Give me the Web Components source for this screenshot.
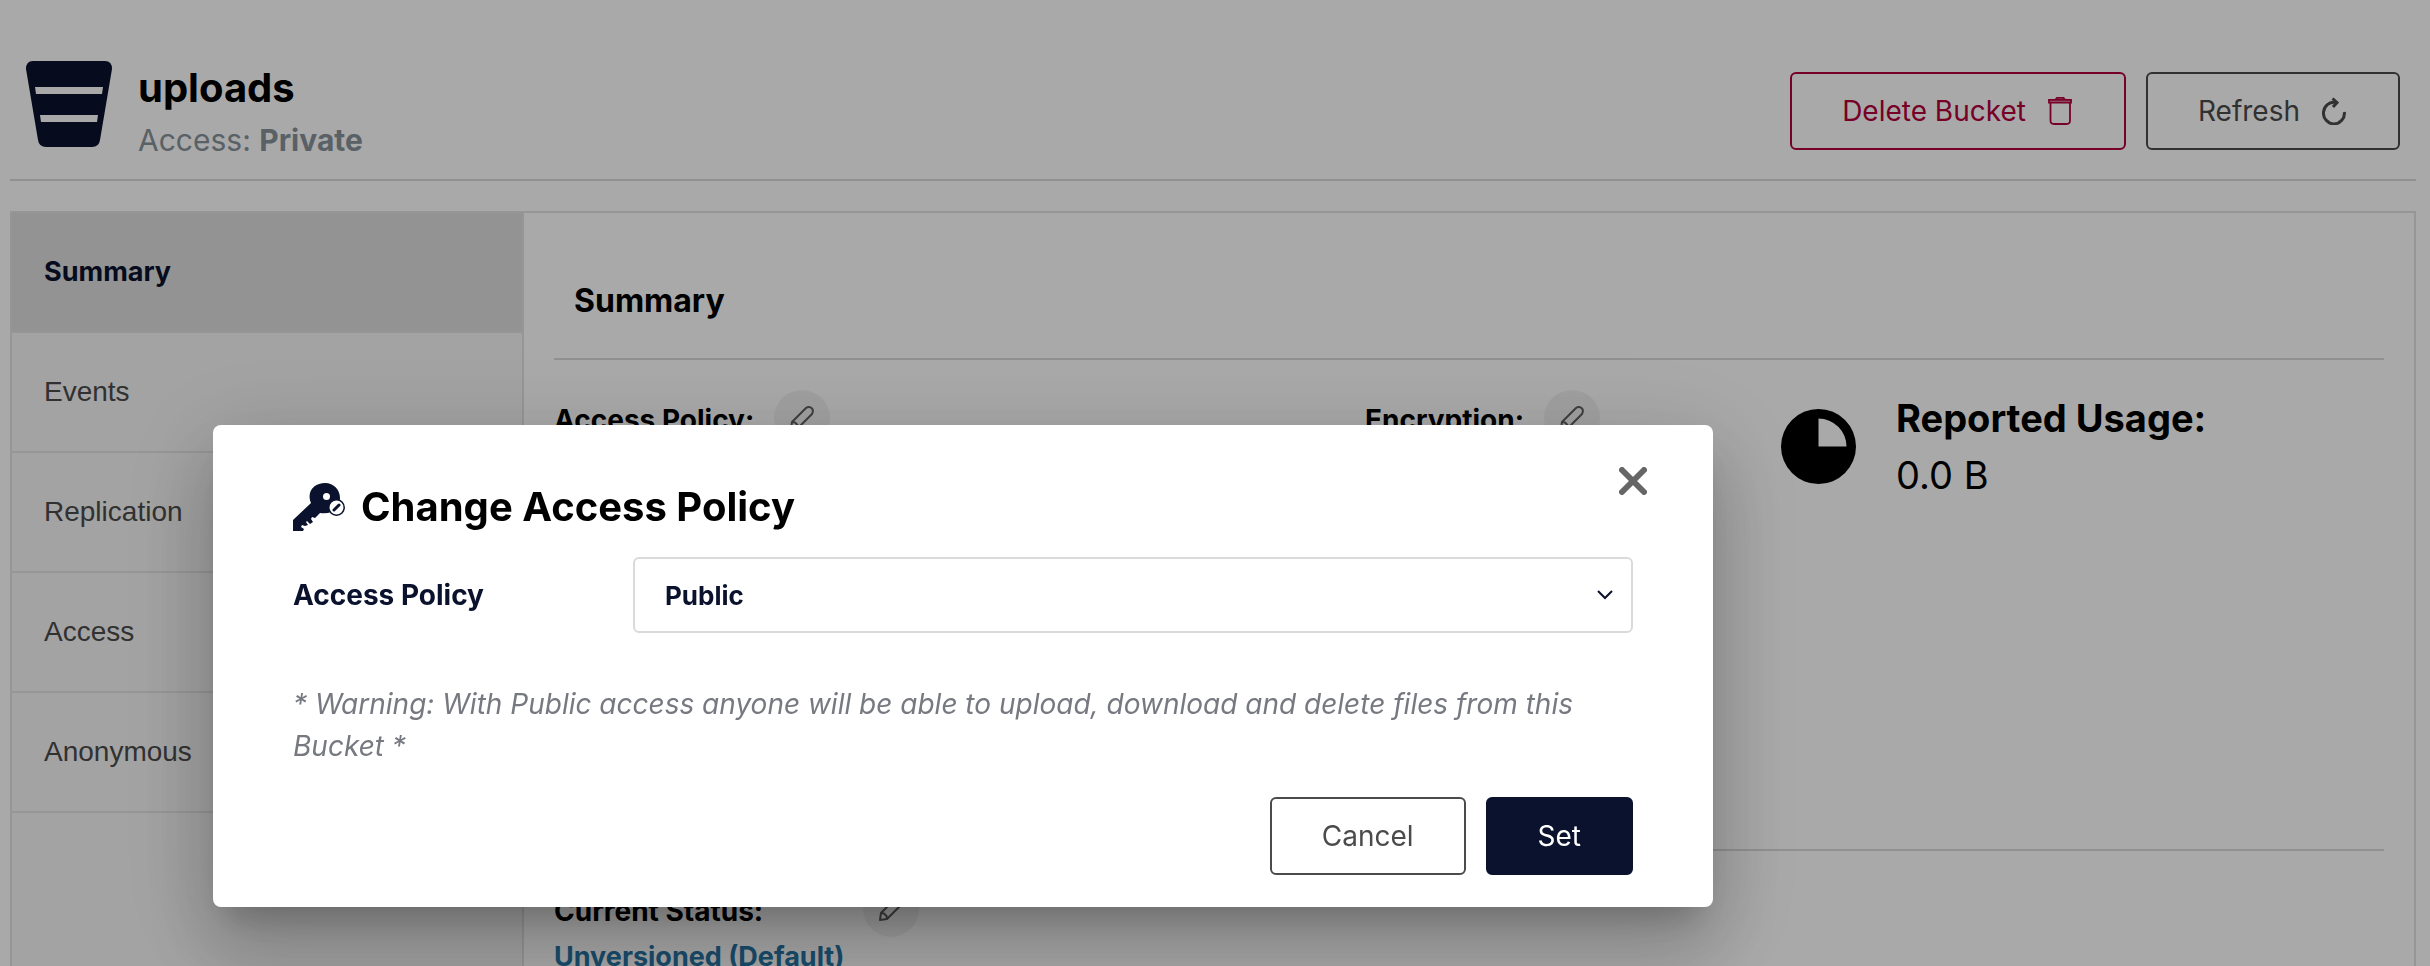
<!DOCTYPE html>
<html lang="en">
<head>
<meta charset="UTF-8">
<meta name="viewport" content="width=device-width, initial-scale=1.0">
<title>uploads</title>
<style>
    html, body { margin: 0; height: 100%; }
    body {
        --navy: #0a122d;
        --line: #dadada;
        --frame: #e2e2e2;
        --dark: #4b4b4b;
        --danger: #b4003c;
        font-family: Inter, "Liberation Sans", sans-serif;
        font-size: 28px; line-height: 34px; color: #000; background: #fff;
        overflow: hidden;
    }
</style>
</head>
<body>
<bucket-page>
    <bucket-header slot="header" name="uploads" access="Private">
        <action-button tone="danger">Delete Bucket
            <svg slot="icon" width="24" height="28" viewBox="0 0 24 28" fill="none" stroke="currentColor" stroke-width="1.800"><path d="M2.500 6v17.500q0 3.500 3.500 3.500h12.500q3.500 0 3.500-3.500V6"/><path d="M1 2.800h22v2.900H1z" fill="currentColor" fill-opacity=".4"/><path d="M7.500 2.500L9 .900h6.500L17 2.500"/></svg>
        </action-button>
        <action-button>Refresh
            <svg slot="icon" width="24" height="28" viewBox="0 0 24 28"><path d="M22.400 15A10.500 10.800 0 1 1 14 5.500" fill="none" stroke="currentColor" stroke-width="3"/><path d="M10.500 1.500L15 5.500l-4 4.500" fill="none" stroke="currentColor" stroke-width="3"/></svg>
        </action-button>
    </bucket-header>
    <side-tabs slot="tabs"></side-tabs>
    <summary-panel></summary-panel>
</bucket-page>
<policy-dialog></policy-dialog>

<script>
class BucketPage extends HTMLElement {
    constructor() {
        super();
        this.attachShadow({ mode: 'open' });
        this.shadowRoot.innerHTML = `
            <style>
                :host { display: flex; flex-direction: column; box-sizing: border-box; min-height: 100%; padding: 0 14px 0 10px; }
                main { flex: 1; display: flex; margin-top: 30px; border: 2px solid var(--frame); border-bottom: 0; }
                ::slotted(side-tabs) { flex: 0 0 510px; border-right: 2px solid var(--frame); }
                ::slotted(summary-panel) { flex: 1; }
            </style>
            <slot name="header"></slot>
            <main><slot name="tabs"></slot><slot></slot></main>
        `;
    }
}

class BucketHeader extends HTMLElement {
    connectedCallback() {
        this.attachShadow({ mode: 'open' });
        this.shadowRoot.innerHTML = `
            <style>
                :host { display: flex; align-items: center; height: 136px; padding: 43px 16px 0; border-bottom: 2px solid var(--line); }
                .bucket { color: var(--navy); margin: 0 26px 14px 0; }
                .titles { flex: 1; margin-top: 4px; }
                h1 { margin: 0; font-size: 40px; line-height: 54px; font-weight: 700; }
                p { margin: 0; font-size: 30px; line-height: 50px; color: #87939b; }
                .actions { display: flex; gap: 20px; }
            </style>
            <svg class="bucket" width="86" height="86" viewBox="0 0 86 86" fill="currentColor" fill-rule="evenodd">
                <path d="M7 0h72q7 0 7 8l-12 71q-1 7-8 7H20q-7 0-8-7L0 8q0-8 7-8zM9 26l1 7h66l1-7zM14 54l1 7h56l1-7z"/>
            </svg>
            <div class="titles">
                <h1>${this.getAttribute('name')}</h1>
                <p>Access: <b>${this.getAttribute('access')}</b></p>
            </div>
            <div class="actions"><slot></slot></div>
        `;
    }
}

class ActionButton extends HTMLElement {
    constructor() {
        super();
        this.attachShadow({ mode: 'open' });
        this.shadowRoot.innerHTML = `
            <style>
                :host { display: block; color: var(--dark); }
                :host([tone="danger"]) { color: var(--danger); }
                :host([tone="primary"]) button { background: var(--navy); border-color: var(--navy); color: #fff; }
                button {
                    display: flex; align-items: center; height: 78px; padding: 0 50px;
                    font: inherit; color: inherit; background: none;
                    border: 2px solid currentColor; border-radius: 6px; cursor: pointer;
                }
                ::slotted(svg) { margin: 0 2px 0 22px; }
            </style>
            <button type="button"><span><slot></slot></span><slot name="icon"></slot></button>
        `;
    }
}

class SideTabs extends HTMLElement {
    constructor() {
        super();
        this.attachShadow({ mode: 'open' });
        this.tabs = ['Summary', 'Events', 'Replication', 'Access', 'Anonymous'];
    }

    connectedCallback() {
        this.shadowRoot.innerHTML = `
            <style>
                :host { display: block; background: #f6f6f6; }
                a {
                    display: flex; align-items: center; height: 118px; padding: 0 32px;
                    border-bottom: 2px solid var(--frame); text-decoration: none;
                    font-family: "Liberation Sans", Arial, sans-serif; color: var(--dark);
                }
                a.active { background: #dedede; font-family: Inter, sans-serif; font-size: 27px; font-weight: 700; color: var(--navy); }
            </style>
            <nav>
                ${this.tabs.map((tab, i) => `<a href="#${tab.toLowerCase()}" class="${i === 0 ? 'active' : ''}">${tab}</a>`).join('')}
            </nav>
        `;
    }
}

// Round pencil button next to an editable value
class EditButton extends HTMLElement {
    connectedCallback() {
        this.attachShadow({ mode: 'open' });
        this.shadowRoot.innerHTML = `
            <style>
                :host { display: block; }
                button { display: grid; place-items: center; width: 56px; height: 56px; padding: 0; border: 0; border-radius: 50%; background: #f2f2f2; color: #5e5e5e; cursor: pointer; }
            </style>
            <button type="button" aria-label="Edit ${this.getAttribute('label')}">
                <svg width="24" height="24" viewBox="0 0 24 24" fill="none" stroke="currentColor" stroke-width="2" stroke-linejoin="round"><path d="M1 23l1-7L16 2q3-2 5.500 0t.5 6L8 22zM2 16l3 .5L7.500 19l.5 3"/></svg>
            </button>
        `;
    }
}

class SummaryPanel extends HTMLElement {
    constructor() {
        super();
        this.attachShadow({ mode: 'open' });
        this.shadowRoot.innerHTML = `
            <style>
                :host { display: block; padding: 0 30px; }
                h2 { margin: 0; padding: 30px 20px 0; height: 115px; line-height: 116px; font-size: 32px; font-weight: 700; border-bottom: 2px solid var(--line); }
                .info { display: grid; grid-template-columns: 811px 416px 1fr; align-items: start; box-sizing: border-box; min-height: 491px; padding-top: 30px; border-bottom: 2px solid var(--line); }
                /* labels sit slightly below the middle of the pencil */
                .field { display: flex; align-items: end; gap: 20px; line-height: 52px; font-weight: 700; }
                .usage { display: flex; gap: 40px; font-size: 38px; line-height: 57px; }
                .usage svg { margin-top: 19px; }
                .status { margin-top: 30px; }
                .status .field { gap: 100px; }
                a { display: block; padding-top: 3px; color: #2674a5; font-size: 27px; font-weight: 700; text-decoration: none; }
            </style>
            <h2>Summary</h2>
            <div class="info">
                <div class="field">Access Policy: <edit-button label="access policy"></edit-button></div>
                <div class="field">Encryption: <edit-button label="encryption"></edit-button></div>
                <div class="usage">
                    <svg width="75" height="75" viewBox="0 0 75 75"><path fill-rule="evenodd" d="M37.500 0a37.500 37.500 0 1 0 0 75a37.500 37.500 0 1 0 0-75zM37.500 9.500A28 28 0 0 1 65.500 37.500h-28z"/></svg>
                    <div><b>Reported Usage:</b><br>0.0 B</div>
                </div>
            </div>
            <div class="status">
                <div class="field">Current Status: <edit-button label="versioning"></edit-button></div>
                <a href="#versioning">Unversioned (Default)</a>
            </div>
        `;
    }
}

class PolicyDialog extends HTMLElement {
    constructor() {
        super();
        this.attachShadow({ mode: 'open' });
        this.shadowRoot.innerHTML = `
            <style>
                :host { display: block; position: fixed; inset: 0; background: rgba(0, 0, 0, .336); }
                section {
                    position: absolute; left: 213px; top: 425px; width: 1500px; max-width: 90vw; box-sizing: border-box;
                    padding: 56px 80px 32px; background: #fff; border-radius: 8px;
                    box-shadow: 0 22px 30px -14px rgba(0, 0, 0, .2), 0 48px 76px 6px rgba(0, 0, 0, .14), 0 18px 92px 16px rgba(0, 0, 0, .12);
                }
                h2 { display: flex; align-items: center; gap: 16px; margin: 0; height: 52px; font-size: 40px; font-weight: 700; }
                h2 svg { color: var(--navy); }
                .close { position: absolute; right: 66px; top: 42px; padding: 0; border: 0; background: none; color: #666; cursor: pointer; line-height: 0; }
                .row { display: flex; align-items: center; margin-top: 24px; color: var(--navy); font-weight: 700; }
                label { flex: 0 0 340px; }
                .select { flex: 1; display: grid; align-items: center; }
                .select > * { grid-area: 1 / 1; }
                select {
                    appearance: none; width: 100%; height: 76px; padding: 2px 30px 0; border: 2px solid #dadada; border-radius: 6px;
                    background: #fff; font: inherit; font-size: 26px; color: inherit;
                }
                .select svg { justify-self: end; margin-right: 20px; pointer-events: none; }
                p { margin: 50px 0 0; line-height: 42px; font-style: italic; color: #777981; }
                .buttons { display: flex; justify-content: flex-end; gap: 20px; margin-top: 30px; }
            </style>
            <section role="dialog" aria-labelledby="title">
                <h2 id="title">
                    <svg width="52" height="48" viewBox="0 0 52 48">
                        <path fill="currentColor" d="M0 48V37L18 20C13 8 22 0 32 0c9 0 15 7 15 15 0 10-8 17-20 15l-5 5-3-1-1 2 2 3-3 2-3-3-1 1 2 3-3 1-3-1-1 2 3 2-1 2z"/>
                        <circle cx="33.500" cy="13.500" r="3.500" fill="#fff"/>
                        <circle cx="43.500" cy="24.500" r="7.700" fill="#fff" stroke="currentColor" stroke-width="1.500"/>
                        <path d="M41 27l5-5" stroke="currentColor" stroke-width="3" stroke-linecap="round"/>
                    </svg>
                    Change Access Policy
                </h2>
                <button class="close" type="button" aria-label="Close">
                    <svg width="28" height="28" viewBox="0 0 28 28" stroke="currentColor" stroke-width="6" stroke-linecap="round"><path d="M3 3l22 22M25 3L3 25"/></svg>
                </button>
                <div class="row">
                    <label for="policy">Access Policy</label>
                    <div class="select">
                        <select id="policy"><option>Public</option><option>Private</option></select>
                        <svg width="16" height="10" viewBox="0 0 16 10" fill="none" stroke="currentColor" stroke-width="2"><path d="M1 1l7 7 7-7"/></svg>
                    </div>
                </div>
                <p>* Warning: With Public access anyone will be able to upload, download and delete files from this Bucket *</p>
                <div class="buttons">
                    <action-button>Cancel</action-button>
                    <action-button tone="primary">Set</action-button>
                </div>
            </section>
        `;
        this.shadowRoot.querySelector('.close').onclick = () => this.remove();
    }
}

customElements.define('action-button', ActionButton);
customElements.define('edit-button', EditButton);
customElements.define('bucket-header', BucketHeader);
customElements.define('side-tabs', SideTabs);
customElements.define('summary-panel', SummaryPanel);
customElements.define('bucket-page', BucketPage);
customElements.define('policy-dialog', PolicyDialog);
</script>
</body>
</html>
